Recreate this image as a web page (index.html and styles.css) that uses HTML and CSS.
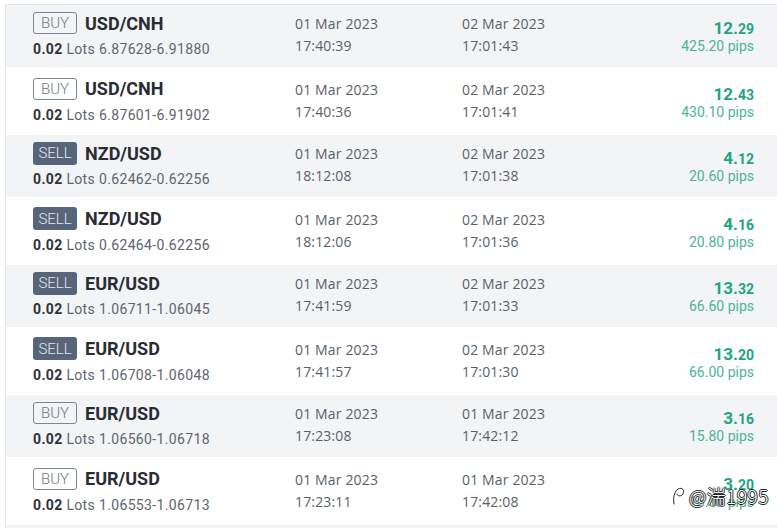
FILE: index.html
```html
<!DOCTYPE html>
<html>
<head>
<meta charset="utf-8">
<link rel="stylesheet" href="styles.css">
</head>
<body>
<div class="list">
  <div class="row odd">
    <div class="inst"><div class="top"><span class="badge buy">BUY</span><span class="pair">USD/CNH</span></div><div class="lots"><b>0.02</b> Lots 6.87628-6.91880</div></div>
    <div class="date">01 Mar 2023<br>17:40:39</div>
    <div class="date">02 Mar 2023<br>17:01:43</div>
    <div class="pl"><div class="amt">12.<small>29</small></div><div class="pips">425.20 pips</div></div>
  </div>
  <div class="row even">
    <div class="inst"><div class="top"><span class="badge buy">BUY</span><span class="pair">USD/CNH</span></div><div class="lots"><b>0.02</b> Lots 6.87601-6.91902</div></div>
    <div class="date">01 Mar 2023<br>17:40:36</div>
    <div class="date">02 Mar 2023<br>17:01:41</div>
    <div class="pl"><div class="amt">12.<small>43</small></div><div class="pips">430.10 pips</div></div>
  </div>
  <div class="row odd">
    <div class="inst"><div class="top"><span class="badge sell">SELL</span><span class="pair">NZD/USD</span></div><div class="lots"><b>0.02</b> Lots 0.62462-0.62256</div></div>
    <div class="date">01 Mar 2023<br>18:12:08</div>
    <div class="date">02 Mar 2023<br>17:01:38</div>
    <div class="pl"><div class="amt">4.<small>12</small></div><div class="pips">20.60 pips</div></div>
  </div>
  <div class="row even">
    <div class="inst"><div class="top"><span class="badge sell">SELL</span><span class="pair">NZD/USD</span></div><div class="lots"><b>0.02</b> Lots 0.62464-0.62256</div></div>
    <div class="date">01 Mar 2023<br>18:12:06</div>
    <div class="date">02 Mar 2023<br>17:01:36</div>
    <div class="pl"><div class="amt">4.<small>16</small></div><div class="pips">20.80 pips</div></div>
  </div>
  <div class="row odd">
    <div class="inst"><div class="top"><span class="badge sell">SELL</span><span class="pair">EUR/USD</span></div><div class="lots"><b>0.02</b> Lots 1.06711-1.06045</div></div>
    <div class="date">01 Mar 2023<br>17:41:59</div>
    <div class="date">02 Mar 2023<br>17:01:33</div>
    <div class="pl"><div class="amt">13.<small>32</small></div><div class="pips">66.60 pips</div></div>
  </div>
  <div class="row even">
    <div class="inst"><div class="top"><span class="badge sell">SELL</span><span class="pair">EUR/USD</span></div><div class="lots"><b>0.02</b> Lots 1.06708-1.06048</div></div>
    <div class="date">01 Mar 2023<br>17:41:57</div>
    <div class="date">02 Mar 2023<br>17:01:30</div>
    <div class="pl"><div class="amt">13.<small>20</small></div><div class="pips">66.00 pips</div></div>
  </div>
  <div class="row odd">
    <div class="inst"><div class="top"><span class="badge buy">BUY</span><span class="pair">EUR/USD</span></div><div class="lots"><b>0.02</b> Lots 1.06560-1.06718</div></div>
    <div class="date">01 Mar 2023<br>17:23:08</div>
    <div class="date">01 Mar 2023<br>17:42:12</div>
    <div class="pl"><div class="amt">3.<small>16</small></div><div class="pips">15.80 pips</div></div>
  </div>
  <div class="row even">
    <div class="inst"><div class="top"><span class="badge buy">BUY</span><span class="pair">EUR/USD</span></div><div class="lots"><b>0.02</b> Lots 1.06553-1.06713</div></div>
    <div class="date">01 Mar 2023<br>17:23:11</div>
    <div class="date">01 Mar 2023<br>17:42:08</div>
    <div class="pl"><div class="amt">3.<small>20</small></div><div class="pips">16.00 pips</div></div>
  </div>
  <div class="row tail"></div>
</div>
<div class="watermark"><svg class="wm-logo" width="16" height="20" viewBox="0 0 16 20"><path d="M3 18 C2 12 3 6 7 3 C11 1 14 4 12 8 C10 11 6 10 6 8" fill="none" stroke="#fff" stroke-width="3" stroke-linecap="round"/><path d="M3 18 C2 12 3 6 7 3 C11 1 14 4 12 8 C10 11 6 10 6 8" fill="none" stroke="#222" stroke-width="1" stroke-linecap="round"/></svg><span>@湍1995</span></div>
</body>
</html>
```

FILE: styles.css
```css
html, body {
  margin: 0;
  padding: 0;
  background: #fff;
  overflow: hidden;
}
body {
  width: 777px;
  height: 528px;
  position: relative;
}
.list {
  margin: 4px 0 0 5px;
  border-top: 1px solid #e4e6e9;
  border-left: 1px solid #e4e6e9;
}
.row {
  display: grid;
  grid-template-columns: 262px 167px 1fr auto;
  padding: 0 23px 0 27px;
  box-sizing: border-box;
}
.row.odd {
  background: #f3f4f6;
  height: 61.5px;
  padding-top: 7px;
}
.row.even {
  background: #fff;
  height: 68.5px;
  padding-top: 11px;
}
.row.tail {
  background: #f3f4f6;
  height: 3px;
}
.top {
  display: flex;
  align-items: center;
  height: 22px;
}
.badge {
  box-sizing: border-box;
  width: 44px;
  height: 22px;
  border-radius: 3px;
  font-family: Roboto, "Noto Sans", sans-serif;
  font-size: 15px;
  font-weight: 300;
  display: flex;
  align-items: center;
  justify-content: center;
  margin-right: 8px;
}
.badge.buy {
  border: 1px solid #7c8593;
  color: #6f7784;
}
.badge.sell {
  background: #56657a;
  color: #e6e9ee;
  height: 23px;
}
.pair {
  font-family: Roboto, "Noto Sans", sans-serif;
  font-weight: 700;
  font-size: 18px;
  color: #2a2c33;
}
.lots {
  margin-top: 6px;
  font-family: Roboto, "Noto Sans", sans-serif;
  font-size: 14px;
  line-height: 18px;
  letter-spacing: 0.35px;
  color: #60656e;
}
.lots b {
  color: #2f3238;
  font-weight: 700;
}
.date {
  font-family: "Open Sans", sans-serif;
  font-size: 14px;
  line-height: 22px;
  padding-top: 1px;
  letter-spacing: 0.15px;
  color: #5a5f68;
}
.pl {
  text-align: right;
  font-family: Roboto, "Noto Sans", sans-serif;
}
.amt {
  margin-top: 5px;
  height: 20px;
  line-height: 22px;
  font-size: 17px;
  font-weight: 700;
  color: #22a384;
}
.amt small {
  font-size: 14px;
}
.pips {
  font-size: 14px;
  line-height: 18px;
  color: #4cb399;
}
.watermark {
  position: absolute;
  left: 671px;
  top: 482px;
  display: flex;
  align-items: center;
  gap: 2px;
  font-family: "Noto Sans CJK SC", "Noto Sans", sans-serif;
  font-size: 19px;
  font-weight: 300;
  color: #fff;
  text-shadow: 1px 0 0 #222, -1px 0 0 #222, 0 1px 0 #222, 0 -1px 0 #222;
  letter-spacing: 0.5px;
}
```
